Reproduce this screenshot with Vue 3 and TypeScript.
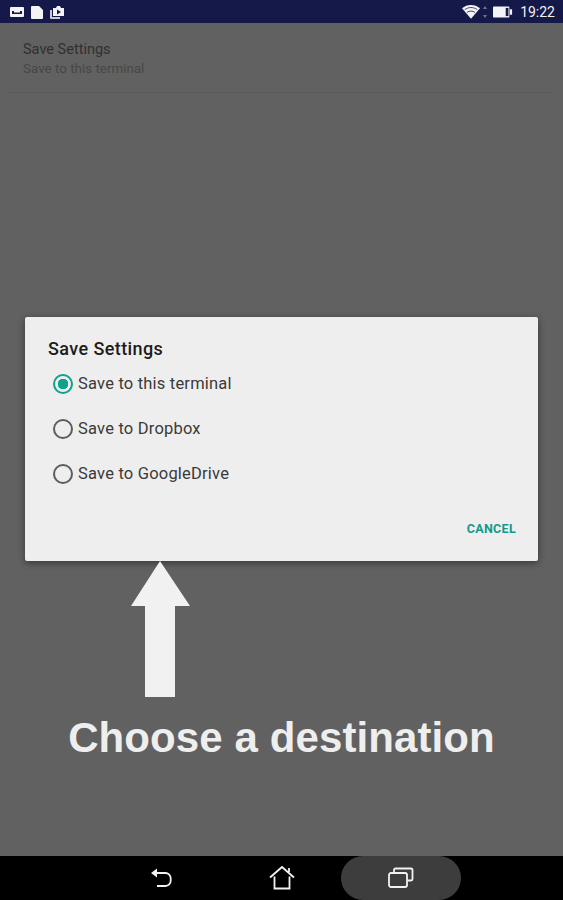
<script setup lang="ts">
const options = [
  { label: 'Save to this terminal', checked: true },
  { label: 'Save to Dropbox', checked: false },
  { label: 'Save to GoogleDrive', checked: false },
]
</script>

<template>
  <div class="screen">
    <header class="status">
      <div class="status-left">
        <svg width="16" height="14" viewBox="0 0 16 14"><path fill="#f4f4f6" d="M2 2h12a1 1 0 0 1 1 1v8a1 1 0 0 1-1 1H2a1 1 0 0 1-1-1V3a1 1 0 0 1 1-1z"/><path fill="#15194a" d="M3 9V6h2v1.5h6V6h2v3z"/></svg>
        <svg width="14" height="14" viewBox="0 0 14 14"><path fill="#f4f4f6" d="M2 1h7l4 4v8a1 1 0 0 1-1 1H2a1 1 0 0 1-1-1V2a1 1 0 0 1 1-1z"/></svg>
        <svg width="16" height="16" viewBox="0 0 16 16"><path fill="#c9cad2" d="M1 6h2v7h8v2H2a1 1 0 0 1-1-1z"/><path fill="#f4f4f6" d="M4 4h3l1-2h3l1 2h3v8H4z"/><path fill="#15194a" d="M8 5.500l4 2.500-4 2.500z"/></svg>
      </div>
      <div class="status-right">
        <svg width="18" height="15" viewBox="0 0 20 16"><path fill="#f4f4f6" d="M10 16L0 4.500C5.500-.5 14.500-.5 20 4.500z"/><path fill="none" stroke="#15194a" stroke-width=".9" d="M3 6c4-3.200 10-3.200 14 0M5.500 9c2.700-2 6.300-2 9 0"/></svg>
        <svg class="updown" width="6" height="12" viewBox="0 0 6 12"><path fill="#6f7391" d="M3 0l2 3H1zM3 12L1 9h4z"/></svg>
        <svg class="battery" width="20" height="14" viewBox="0 0 22 14"><rect x="0" y="1" width="18" height="12" rx="1" fill="#f4f4f6"/><rect x="14" y="2.500" width="3" height="9" fill="#15194a"/><rect x="18.500" y="4" width="2.500" height="6" fill="#f4f4f6"/></svg>
        <span class="time">19:22</span>
      </div>
    </header>

    <main class="content">
      <section class="setting">
        <div class="setting-title">Save Settings</div>
        <div class="setting-sub">Save to this terminal</div>
      </section>

      <section class="dialog">
        <h2 class="dialog-title">Save Settings</h2>
        <ul class="options">
          <li v-for="o in options" :key="o.label" class="option">
            <span class="radio" :class="{ on: o.checked }"></span>
            <span class="option-label">{{ o.label }}</span>
          </li>
        </ul>
        <div class="actions"><span class="cancel">CANCEL</span></div>
      </section>

      <svg class="arrow" width="60" height="136" viewBox="0 0 60 136">
        <path fill="#f1f1f1" d="M30 0L60 45H45V136H15V45H1z"/>
      </svg>

      <p class="caption">Choose a destination</p>
    </main>

    <nav class="nav">
      <button class="nav-btn back" aria-label="Back">
        <svg width="26" height="24" viewBox="0 0 26 24"><path fill="#f2f2f2" d="M2 7l6-4.500v9z"/><path fill="none" stroke="#f2f2f2" stroke-width="1.800" d="M7 7h9.500a5.200 5.200 0 0 1 5.200 5.200v2.600a5.200 5.200 0 0 1-5.200 5.200H8"/></svg>
      </button>
      <button class="nav-btn home" aria-label="Home">
        <svg width="26" height="26" viewBox="0 0 26 26"><path fill="none" stroke="#f2f2f2" stroke-width="1.800" d="M1 12.500L13 2l12 10.500M5.500 11.500V23.500h15V11.500M20 7V3"/></svg>
      </button>
      <button class="nav-btn recent" aria-label="Recent apps">
        <svg width="26" height="22" viewBox="0 0 26 22"><rect x="1" y="6" width="18" height="14" rx="2" fill="none" stroke="#f2f2f2" stroke-width="1.800"/><path fill="none" stroke="#f2f2f2" stroke-width="1.800" d="M6 5.500V3a1.500 1.500 0 0 1 1.500-1.500H23A1.500 1.500 0 0 1 24.500 3v9a1.500 1.500 0 0 1-1.500 1.500h-3"/></svg>
      </button>
    </nav>
  </div>
</template>

<style>
html, body { margin: 0; background: #000; }
</style>

<style scoped>
.screen {
  width: 563px;
  height: 900px;
  display: flex;
  flex-direction: column;
  overflow: hidden;
  font-family: Roboto, "Liberation Sans", sans-serif;
}
.status {
  height: 23px;
  flex: none;
  background: #15194a;
  display: flex;
  justify-content: space-between;
  align-items: center;
  padding: 0 8px 0 9px;
}
.status-left { display: flex; align-items: center; gap: 5px; }
.status-right { display: flex; align-items: center; gap: 2px; }
.battery { margin-left: 3px; }
.time { color: #f2f2f2; font-size: 14px; margin-left: 5px; }
.content {
  flex: 1;
  min-height: 0;
  background: #616161;
  display: flex;
  flex-direction: column;
}
.setting {
  height: 70px;
  flex: none;
  box-sizing: border-box;
  margin: 0 8px;
  padding: 19px 15px 0;
  border-bottom: 1px solid #5b5b5b;
}
.setting-title { color: #303030; font-size: 14.500px; line-height: 16px; }
.setting-sub { color: #474747; font-size: 13.400px; line-height: 15px; margin-top: 3px; }
.dialog {
  margin: 224px 25px 0;
  height: 244px;
  flex: none;
  box-sizing: border-box;
  background: #eeeeee;
  border-radius: 2px;
  box-shadow: 0 2px 7px rgba(0, 0, 0, 0.45);
  padding: 22px 22px 0 23px;
  display: flex;
  flex-direction: column;
}
.dialog-title {
  margin: 0;
  font-size: 18px;
  line-height: 20px;
  font-weight: 500;
  letter-spacing: 0.4px;
  color: #1c1c1c;
}
.options { list-style: none; margin: 2px 0 0; padding: 0; }
.option {
  height: 45px;
  display: flex;
  align-items: center;
  padding-left: 5px;
}
.radio {
  width: 20px;
  height: 20px;
  box-sizing: border-box;
  border: 2px solid #5d5d5d;
  border-radius: 50%;
  flex: none;
  margin-right: 5px;
}
.radio.on {
  border-color: #10a08d;
  background: radial-gradient(circle, #10a08d 0 5px, transparent 5.500px);
}
.option-label { color: #3a3a3a; font-size: 16.500px; letter-spacing: 0.2px; }
.actions { flex: 1; display: flex; justify-content: flex-end; align-items: flex-start; padding-top: 25px; }
.cancel { color: #12998a; font-size: 12.500px; font-weight: 700; letter-spacing: 0.3px; line-height: 15px; }
.arrow { display: block; flex: none; margin-left: 130px; }
.caption {
  margin: 16px 0 0;
  text-align: center;
  color: #eeeeee;
  font-family: "Liberation Sans", Arial, sans-serif;
  font-weight: 700;
  font-size: 42px;
  letter-spacing: 0.1px;
  line-height: 50px;
}
.nav {
  height: 44px;
  flex: none;
  background: #000;
  display: flex;
  align-items: center;
  position: relative;
}
.nav-btn {
  background: none;
  border: 0;
  padding: 0;
  display: flex;
  align-items: center;
  justify-content: center;
  position: absolute;
  top: 0;
  bottom: 0;
}
.back { left: 149px; width: 26px; }
.home { left: 269px; width: 26px; }
.recent { left: 341px; width: 120px; background: #3d3d3d; border-radius: 24px; }
</style>
